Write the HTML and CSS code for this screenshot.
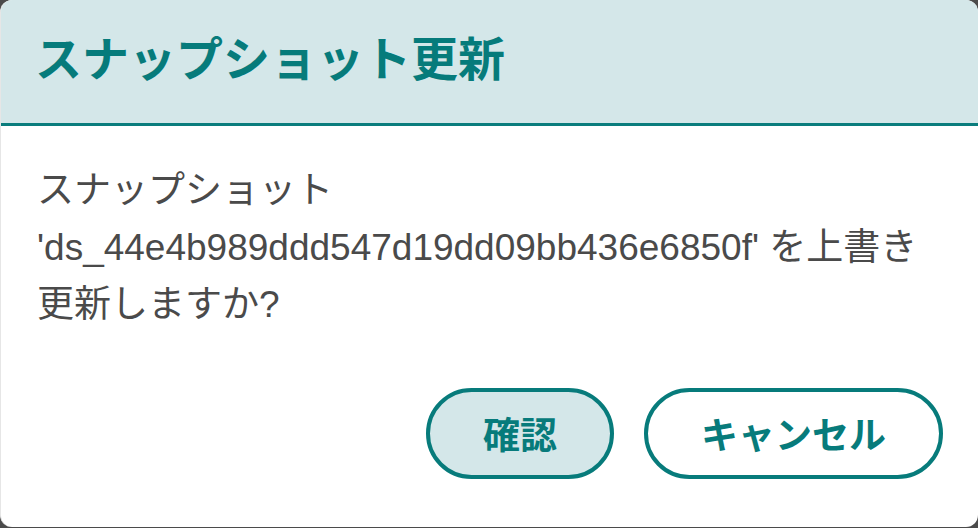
FILE: index.html
```html
<!DOCTYPE html>
<html lang="ja">
<head>
<meta charset="utf-8">
<title>スナップショット更新</title>
<link rel="stylesheet" href="styles.css">
</head>
<body>
<div class="dialog">
  <div class="dialog-header">
    <h1 class="dialog-title">スナップショット更新</h1>
  </div>
  <div class="dialog-body">
    <p class="message">スナップショット<br>'ds_44e4b989ddd547d19dd09bb436e6850f' を上書き<br>更新しますか?</p>
  </div>
  <div class="dialog-actions">
    <button class="btn btn-primary" type="button">確認</button>
    <button class="btn btn-secondary" type="button">キャンセル</button>
  </div>
</div>
</body>
</html>
```

FILE: styles.css
```css
html, body {
  margin: 0;
  padding: 0;
  height: 100%;
}
body {
  background: #4b4b4b;
  font-family: "Liberation Sans", "Noto Sans CJK JP", sans-serif;
}
.dialog {
  box-sizing: border-box;
  width: 978px;
  height: 527px;
  background: #ffffff;
  border-radius: 12px;
  overflow: hidden;
  display: flex;
  flex-direction: column;
  border-left: 1px solid #e6e6e6;
}
.dialog-header {
  box-sizing: border-box;
  height: 126px;
  background: #d4e7e9;
  border-bottom: 3px solid #0a7d7d;
  display: flex;
  align-items: center;
  padding: 0 0 12px 34px;
}
.dialog-title {
  margin: 0;
  font-family: "Noto Sans CJK JP", sans-serif;
  font-size: 47px;
  font-weight: 700;
  color: #067b7b;
  line-height: 1;
  letter-spacing: 0;
}
.dialog-body {
  padding: 36px 36px 0 36px;
  flex: 1;
}
.message {
  margin: 0;
  font-size: 37px;
  line-height: 57px;
  color: #4a4a4a;
}
.dialog-actions {
  display: flex;
  justify-content: flex-end;
  gap: 30px;
  padding: 0 35px 48px 0;
}
.btn {
  box-sizing: border-box;
  height: 91px;
  border: 4px solid #077b7b;
  border-radius: 46px;
  font-family: "Noto Sans CJK JP", sans-serif;
  font-size: 37px;
  font-weight: 700;
  color: #077b7b;
  padding: 0 53px;
  line-height: 1;
  cursor: pointer;
}
.btn-primary {
  background: #d4e7e9;
}
.btn-secondary {
  background: #ffffff;
}
```
